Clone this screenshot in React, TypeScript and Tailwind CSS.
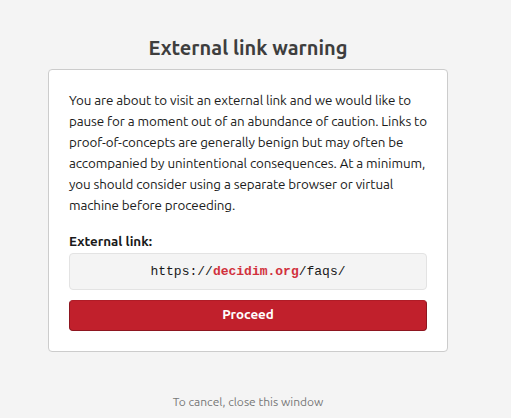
import React from 'react'

const App = () => {
  return (
    <div className="min-h-[418px] bg-[#f4f4f4] font-['Ubuntu','Noto_Sans',sans-serif] text-[#1a1a1a]">
      <div className="flex w-[496px] flex-col items-center pt-[33px]">
        <h1 className="text-[20px] leading-[30px] font-bold text-[#3e3e3e]">External link warning</h1>

        <div className="mt-[6px] w-[400px] rounded-[4px] border border-[#cccccc] bg-white px-[20px] pt-[20px] pb-[20px]">
          <p className="text-[13.4px] leading-[21px] tracking-[-0.1px]">
            You are about to visit an external link and we would like to pause for a moment out of an abundance of
            caution. Links to proof-of-concepts are generally benign but may often be accompanied by unintentional
            consequences. At a minimum, you should consider using a separate browser or virtual machine before
            proceeding.
          </p>

          <div className="mt-[16px] text-[13.4px] leading-[20px] font-bold">External link:</div>

          <div className="mt-[1px] flex h-[37px] items-center justify-center rounded-[4px] border border-[#e3e3e3] bg-[#f4f4f4] font-['Liberation_Mono',monospace] text-[13px] text-[#1a1a1a]">
            <span>https://</span>
            <span className="font-bold text-[#d1313d]">decidim.org</span>
            <span>/faqs/</span>
          </div>

          <button
            type="button"
            className="mt-[10px] flex h-[31px] w-full items-center justify-center rounded-[4px] border border-[#8e1620] border-t-[#b01c27] bg-[#c1202c] text-[13.4px] font-bold text-white"
          >
            Proceed
          </button>
        </div>

        <div className="mt-[41px] text-[12px] text-[#777777]">To cancel, close this window</div>
      </div>
    </div>
  )
}

export default App
